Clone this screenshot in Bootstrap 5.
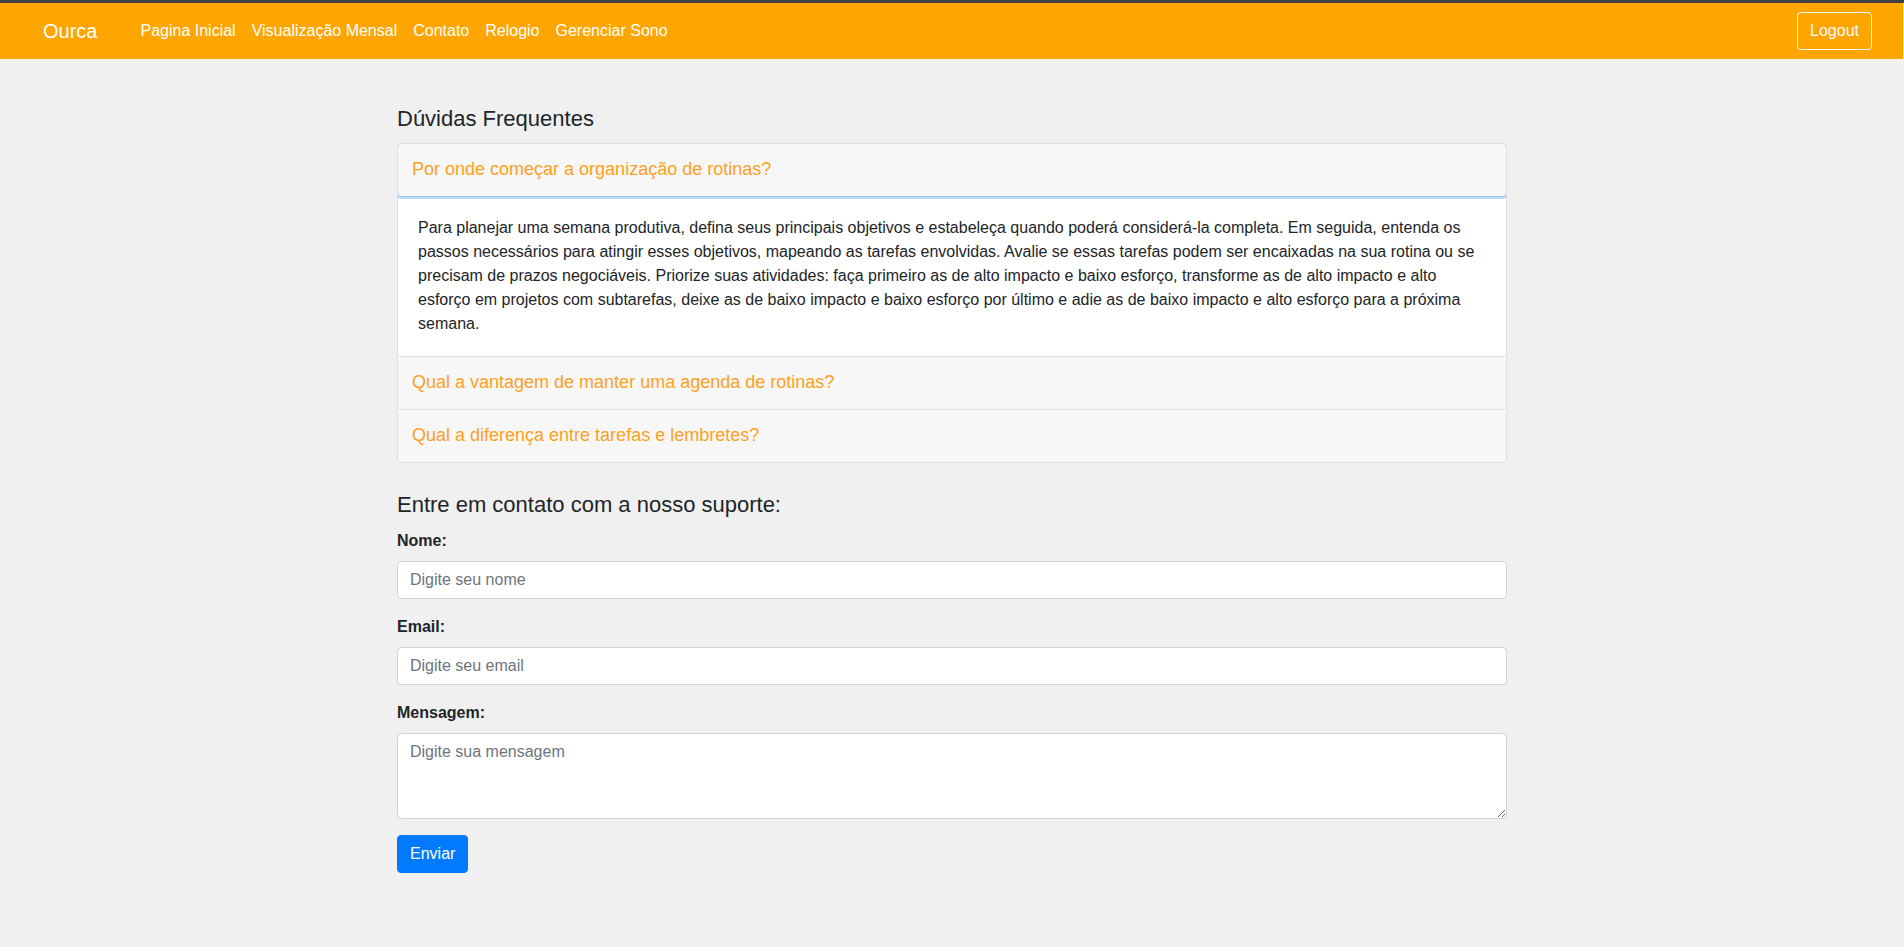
<!DOCTYPE html>
<html lang="pt-BR">
<head>
<meta charset="utf-8">
<meta name="viewport" content="width=device-width, initial-scale=1">
<title>Ourca - Contato</title>
<link href="https://cdn.jsdelivr.net/npm/bootstrap@5.3.0/dist/css/bootstrap.min.css" rel="stylesheet">
<style>
  body {
    background: #f0f0f0;
    color: #212529;
    font-family: "Liberation Sans", Arial, sans-serif;
    border-top: 3px solid #404040;
  }
  .site-nav {
    background: orange;
    padding: 8px 31px 8px 43px;
    margin-right: 1px;
    --bs-navbar-color: #fff;
    --bs-navbar-hover-color: #fff;
    --bs-navbar-brand-color: #fff;
    --bs-navbar-brand-hover-color: #fff;
    --bs-navbar-brand-margin-end: 35px;
  }
  .btn, .form-control { border-radius: 4px; }
  .support-page {
    max-width: 1140px;
    padding: 47px 15px;
  }
  .section-title {
    font-size: 22px;
    line-height: 26px;
    margin-bottom: 11px;
  }
  .faq { margin-bottom: 29px; }
  .faq .card {
    --bs-card-border-color: #dfdfdf;
    --bs-card-border-radius: 4px;
    border-radius: 0;
    overflow: hidden;
  }
  .faq .card:not(:last-child) { border-bottom: 0; }
  .faq .card:first-child { border-radius: 4px 4px 0 0; }
  .faq .card:last-child { border-radius: 0 0 4px 4px; }
  .faq .card-header {
    background: #f7f7f7;
    margin-bottom: -1px;
  }
  .faq-toggle {
    position: relative;
    z-index: 1;
    padding: 14px 14px 16px;
    border: 0;
    font-size: 18px;
    line-height: 22px;
    color: #ffa01e;
  }
  .faq-toggle:hover, .faq-toggle:active { color: #ffa01e !important; }
  .faq-toggle:not(.collapsed) { box-shadow: 0 0 0 3px rgba(0, 123, 255, .25); }
  .faq .card-body { padding: 20px; }
  .form-control { border-color: #ced4da; }
  .form-control::placeholder { color: #6c757d; }
  .btn-send {
    --bs-btn-bg: #007bff;
    --bs-btn-border-color: #007bff;
  }
</style>
</head>
<body>
<nav class="navbar navbar-expand-lg site-nav">
  <a class="navbar-brand" href="#">Ourca</a>
  <button class="navbar-toggler" type="button" data-bs-toggle="collapse" data-bs-target="#menu" aria-controls="menu" aria-expanded="false" aria-label="Abrir menu"><span class="navbar-toggler-icon"></span></button>
  <div class="collapse navbar-collapse" id="menu">
    <ul class="navbar-nav me-auto">
      <li class="nav-item"><a class="nav-link" href="#">Pagina Inicial</a></li>
      <li class="nav-item"><a class="nav-link" href="#">Visualização Mensal</a></li>
      <li class="nav-item"><a class="nav-link" href="#">Contato</a></li>
      <li class="nav-item"><a class="nav-link" href="#">Relogio</a></li>
      <li class="nav-item"><a class="nav-link" href="#">Gerenciar Sono</a></li>
    </ul>
    <button class="btn btn-outline-light" type="button">Logout</button>
  </div>
</nav>

<main class="container support-page">
  <h2 class="section-title fw-normal">Dúvidas Frequentes</h2>
  <div class="faq" id="faq">
    <div class="card">
      <h3 class="card-header p-0"><button class="btn faq-toggle w-100 text-start" type="button" data-bs-toggle="collapse" data-bs-target="#faq1" aria-expanded="true" aria-controls="faq1">Por onde começar a organização de rotinas?</button></h3>
      <div class="collapse show" id="faq1" data-bs-parent="#faq">
        <div class="card-body">Para planejar uma semana produtiva, defina seus principais objetivos e estabeleça quando poderá considerá-la completa. Em seguida, entenda os passos necessários para atingir esses objetivos, mapeando as tarefas envolvidas. Avalie se essas tarefas podem ser encaixadas na sua rotina ou se precisam de prazos negociáveis. Priorize suas atividades: faça primeiro as de alto impacto e baixo esforço, transforme as de alto impacto e alto esforço em projetos com subtarefas, deixe as de baixo impacto e baixo esforço por último e adie as de baixo impacto e alto esforço para a próxima semana.</div>
      </div>
    </div>
    <div class="card">
      <h3 class="card-header p-0"><button class="btn faq-toggle collapsed w-100 text-start" type="button" aria-expanded="false">Qual a vantagem de manter uma agenda de rotinas?</button></h3>
    </div>
    <div class="card">
      <h3 class="card-header p-0"><button class="btn faq-toggle collapsed w-100 text-start" type="button" aria-expanded="false">Qual a diferença entre tarefas e lembretes?</button></h3>
    </div>
  </div>

  <h2 class="section-title fw-normal">Entre em contato com a nosso suporte:</h2>
  <form>
    <div class="mb-3">
      <label class="form-label fw-bold" for="nome">Nome:</label>
      <input class="form-control" type="text" id="nome" placeholder="Digite seu nome">
    </div>
    <div class="mb-3">
      <label class="form-label fw-bold" for="email">Email:</label>
      <input class="form-control" type="email" id="email" placeholder="Digite seu email">
    </div>
    <div class="mb-3">
      <label class="form-label fw-bold" for="mensagem">Mensagem:</label>
      <textarea class="form-control" id="mensagem" rows="3" placeholder="Digite sua mensagem"></textarea>
    </div>
    <button class="btn btn-primary btn-send" type="submit">Enviar</button>
  </form>
</main>
<script src="https://cdn.jsdelivr.net/npm/bootstrap@5.3.0/dist/js/bootstrap.bundle.min.js"></script>
</body>
</html>
